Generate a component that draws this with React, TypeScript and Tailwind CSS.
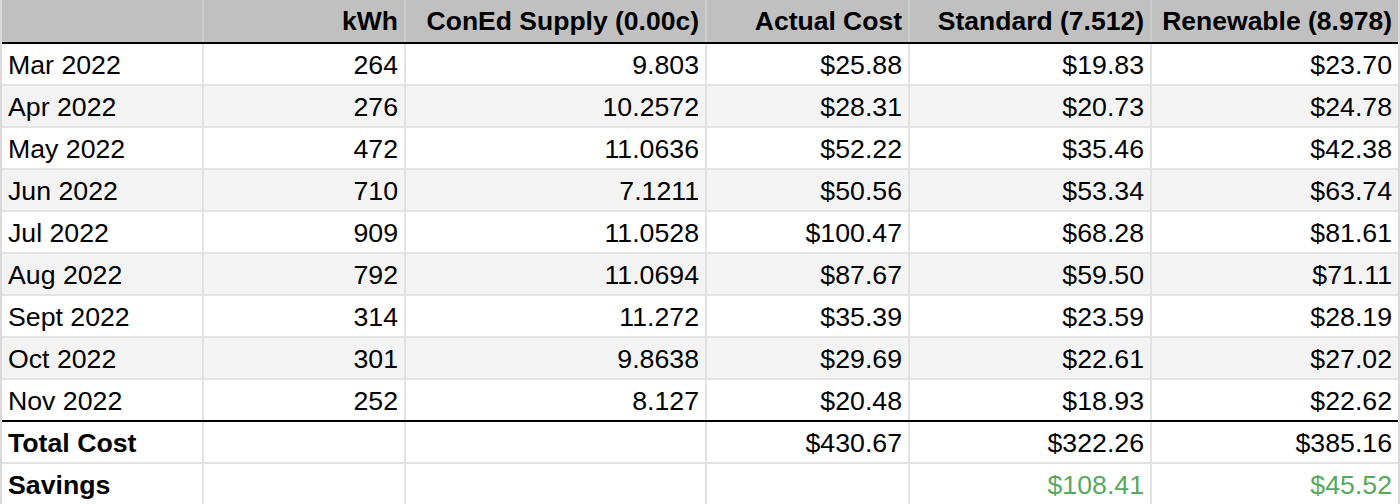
import React from "react";

const rows: string[][] = [
  ["Mar 2022", "264", "9.803", "$25.88", "$19.83", "$23.70"],
  ["Apr 2022", "276", "10.2572", "$28.31", "$20.73", "$24.78"],
  ["May 2022", "472", "11.0636", "$52.22", "$35.46", "$42.38"],
  ["Jun 2022", "710", "7.1211", "$50.56", "$53.34", "$63.74"],
  ["Jul 2022", "909", "11.0528", "$100.47", "$68.28", "$81.61"],
  ["Aug 2022", "792", "11.0694", "$87.67", "$59.50", "$71.11"],
  ["Sept 2022", "314", "11.272", "$35.39", "$23.59", "$28.19"],
  ["Oct 2022", "301", "9.8638", "$29.69", "$22.61", "$27.02"],
  ["Nov 2022", "252", "8.127", "$20.48", "$18.93", "$22.62"],
];

const gridCols = "grid grid-cols-[202px_202px_301px_203px_242px_246px]";

export default function App() {
  return (
    <div
      className="w-[1400px] h-[504px] bg-white border-x-2 border-[#d9d9d9] text-[26.7px] text-black leading-none overflow-hidden whitespace-nowrap"
      style={{ fontFamily: '"Liberation Sans", Arial, sans-serif' }}
    >
      <div className={`${gridCols} h-[44px] bg-[#c0c0c0] border-b-2 border-black font-bold text-[26.5px]`}>
        {["", "kWh", "ConEd Supply (0.00c)", "Actual Cost", "Standard (7.512)", "Renewable (8.978)"].map((h, i) => (
          <div
            key={i}
            className={`flex items-center justify-end pl-[4px] pr-[6px] overflow-visible ${i < 5 ? "border-r-2 border-[#cdcdcd]" : ""}`}
          >
            {h}
          </div>
        ))}
      </div>
      {rows.map((r, ri) => (
        <div
          key={ri}
          className={`${gridCols} h-[42px] border-b-2 ${ri === rows.length - 1 ? "border-black" : "border-[#e2e2e2]"} ${ri % 2 === 1 ? "bg-[#f3f3f3]" : "bg-white"}`}
        >
          {r.map((c, ci) => (
            <div
              key={ci}
              className={`flex items-center px-[6px] pt-[2px] ${ci === 0 ? "justify-start" : "justify-end"} ${ci < 5 ? "border-r-2 border-[#e2e2e2]" : ""}`}
            >
              {c}
            </div>
          ))}
        </div>
      ))}
      <div className={`${gridCols} h-[42px] border-b-2 border-[#e2e2e2] bg-white`}>
        {["Total Cost", "", "", "$430.67", "$322.26", "$385.16"].map((c, ci) => (
          <div
            key={ci}
            className={`flex items-center px-[6px] pt-[2px] ${ci === 0 ? "justify-start font-bold" : "justify-end"} ${ci < 5 ? "border-r-2 border-[#e2e2e2]" : ""}`}
          >
            {c}
          </div>
        ))}
      </div>
      <div className={`${gridCols} h-[40px] bg-white`}>
        {["Savings", "", "", "", "$108.41", "$45.52"].map((c, ci) => (
          <div
            key={ci}
            className={`flex items-center px-[6px] pt-[2px] ${ci === 0 ? "justify-start font-bold" : "justify-end text-[#57a85d]"} ${ci < 5 ? "border-r-2 border-[#e2e2e2]" : ""}`}
          >
            {c}
          </div>
        ))}
      </div>
    </div>
  );
}
